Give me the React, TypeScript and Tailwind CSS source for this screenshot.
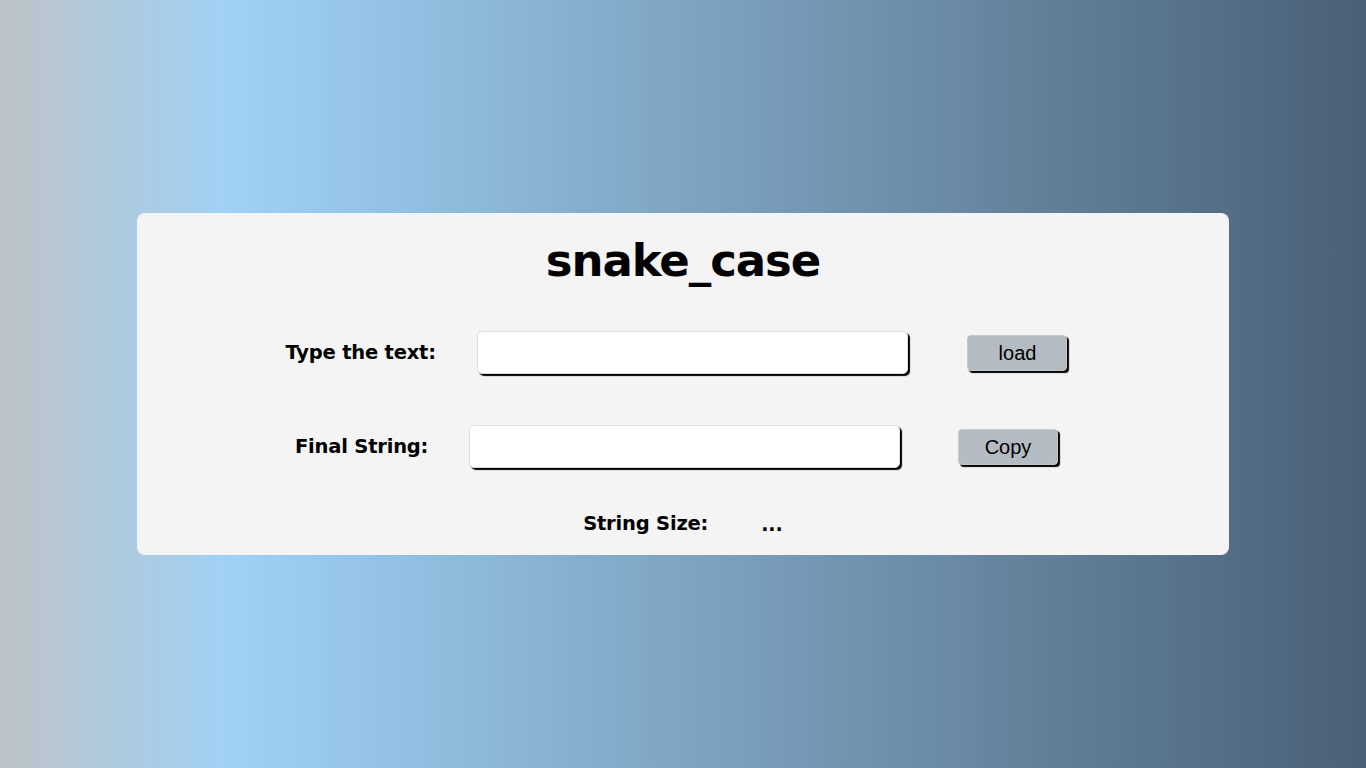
export default function App() {
  return (
    <div className="min-h-screen w-full flex items-center justify-center bg-[linear-gradient(to_right,#bdc3c7_0%,#9fd1f5_17%,#4a6076_100%)]">
      <div className="w-[80%] h-[342px] bg-[#f4f4f4] rounded-[8px] flex flex-col items-center pt-[17px] font-['DejaVu_Sans',sans-serif] text-black">
        {/* Title */}
        <h1 className="h-[60px] flex items-center text-[45px] font-bold tracking-[-1.1px] leading-none">
          snake_case
        </h1>

        {/* Input row */}
        <div className="mt-[40px] h-[45px] flex items-center">
          <label className="w-[149px] text-center whitespace-nowrap text-[19.5px] font-bold tracking-[-0.2px]">
            Type the text:
          </label>
          <input
            type="text"
            className="ml-[43px] w-[431px] h-[43px] bg-white border border-[#dedede] rounded-[5px] shadow-[2px_2px_1px_#000] outline-none px-2"
          />
          <button className="ml-[59px] w-[100px] h-[36px] bg-[#b4bbc2] border border-[#c4c9ce] rounded-[4px] shadow-[2px_2px_1px_#000] text-[20px] font-['Liberation_Sans',Arial,sans-serif] mr-[13px]">
            load
          </button>
        </div>

        {/* Output row */}
        <div className="mt-[49px] h-[45px] flex items-center">
          <label className="w-[131px] text-center whitespace-nowrap text-[19.5px] font-bold tracking-[-0.2px]">
            Final String:
          </label>
          <input
            type="text"
            readOnly
            className="ml-[43px] w-[431px] h-[43px] bg-white border border-[#dedede] rounded-[5px] shadow-[2px_2px_1px_#000] outline-none px-2"
          />
          <button className="ml-[58px] w-[100px] h-[36px] bg-[#b4bbc2] border border-[#c4c9ce] rounded-[4px] shadow-[2px_2px_1px_#000] text-[20px] font-['Liberation_Sans',Arial,sans-serif] mr-[13px]">
            Copy
          </button>
        </div>

        {/* Size */}
        <div className="mt-[40px] h-[30px] flex items-center">
          <span className="w-[121px] text-center whitespace-nowrap text-[19.5px] font-bold tracking-[-0.2px]">
            String Size:
          </span>
          <span className="ml-[57px] text-[19px] font-bold">...</span>
        </div>
      </div>
    </div>
  )
}
